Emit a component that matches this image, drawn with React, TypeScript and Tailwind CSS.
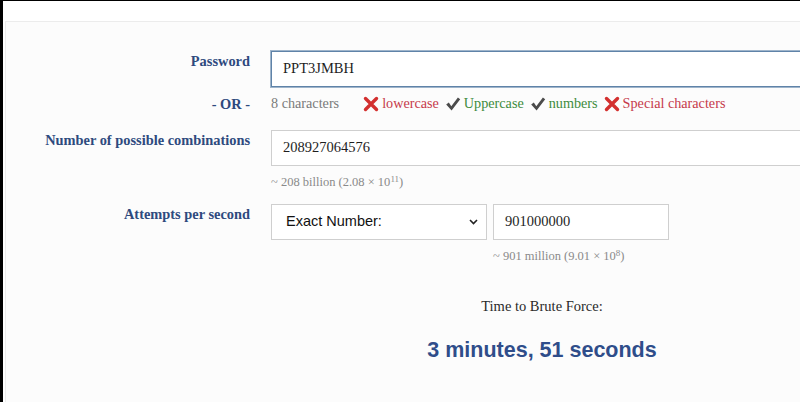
import React from 'react';

const serif = "font-['Liberation_Serif','Times_New_Roman',serif]";
const sans = "font-['Liberation_Sans',Arial,sans-serif]";

const CrossIcon: React.FC = () => (
  <svg width="16" height="16" viewBox="0 0 16 16" className="shrink-0">
    <path d="M2.5 2.5 L13.5 13.5 M13.5 2.5 L2.5 13.5" stroke="#d3302f" strokeWidth="3.4" strokeLinecap="round" />
  </svg>
);

const CheckIcon: React.FC = () => (
  <svg width="16" height="16" viewBox="0 0 16 16" className="shrink-0">
    <path d="M1.2 8.6 L3.8 6.6 L6.3 10.2 L12.9 1.4 L15.2 3.2 L6.6 14.6 Z" fill="#4b4b4b" />
  </svg>
);

interface RowProps {
  label: string;
  className?: string;
  labelClass?: string;
  children: React.ReactNode;
}

const Row: React.FC<RowProps> = ({ label, className = '', labelClass = 'pt-[1px] leading-[18px]', children }) => (
  <div className={`grid grid-cols-[244px_542px] gap-x-[21px] items-start ${className}`}>
    <div className={`text-right text-[14.4px] font-bold text-[#2e4a7e] ${serif} ${labelClass}`}>{label}</div>
    <div>{children}</div>
  </div>
);

const Check: React.FC<{ ok: boolean; text: string }> = ({ ok, text }) => (
  <span className="flex items-center gap-[3px]">
    {ok ? <CheckIcon /> : <CrossIcon />}
    <span className={ok ? 'text-[#3d8b3d]' : 'text-[#c63a4b]'}>{text}</span>
  </span>
);

export default function App() {
  return (
    <div className="w-[800px] h-[402px] overflow-hidden bg-white border-t border-l-[3px] border-black">
      <div className="pt-[20px] pl-[2px]">
        <div className="w-[1000px] h-[400px] border-t border-l border-[#ececec] bg-[#fcfcfc] pt-[29px]">
          <Row label="Password">
            <div className={`h-[36px] w-[542px] border border-[#5f83a8] shadow-[0_0_0_1px_#9fb5cb] bg-white flex items-center pl-[11px] text-[14.5px] text-[#1e1e1e] ${serif}`}>
              PPT3JMBH
            </div>
          </Row>

          <Row label="- OR -" className="mt-[7px]" labelClass="leading-[20px]">
            <div className={`flex items-center h-[20px] text-[14.2px] ${serif}`}>
              <span className="text-[#7a7a7a]">8 characters</span>
              <div className="flex items-center gap-[6px] ml-[24px]">
                <Check ok={false} text="lowercase" />
                <Check ok={true} text="Uppercase" />
                <Check ok={true} text="numbers" />
                <Check ok={false} text="Special characters" />
              </div>
            </div>
          </Row>

          <Row label="Number of possible combinations" className="mt-[16px]">
            <div className={`h-[36px] w-[542px] border border-[#cfcfcf] bg-white flex items-center pl-[11px] text-[14.5px] text-[#1e1e1e] ${serif}`}>
              208927064576
            </div>
            <div className={`mt-[8px] leading-[16px] text-[12.5px] text-[#8a8a8a] ${serif}`}>
              ~ 208 billion (2.08 × 10<sup className="text-[9px]">11</sup>)
            </div>
          </Row>

          <Row label="Attempts per second" className="mt-[14px]">
            <div className="flex gap-[6px]">
              <div className="w-[216px]">
                <div className={`h-[36px] border border-[#cfcfcf] bg-white flex items-center justify-between pl-[14px] pr-[8px] text-[14.5px] text-[#111] ${sans}`}>
                  <span>Exact Number:</span>
                  <svg width="9" height="6" viewBox="0 0 9 6">
                    <path d="M1 1 L4.5 4.5 L8 1" stroke="#222" strokeWidth="1.6" fill="none" />
                  </svg>
                </div>
              </div>
              <div className="w-[176px]">
                <div className={`h-[36px] border border-[#cfcfcf] bg-white flex items-center pl-[11px] text-[14.5px] text-[#1e1e1e] ${serif}`}>
                  901000000
                </div>
                <div className={`mt-[8px] leading-[16px] text-[12.5px] text-[#8a8a8a] ${serif}`}>
                  ~ 901 million (9.01 × 10<sup className="text-[9px]">8</sup>)
                </div>
              </div>
            </div>
            <div className="flex flex-col items-center">
              <div className={`mt-[33px] leading-[18px] text-[14.5px] text-[#2a2a2a] ${serif}`}>Time to Brute Force:</div>
              <div className={`mt-[22px] leading-[26px] text-[21.5px] font-bold text-[#2f4d8a] ${sans}`}>
                3 minutes, 51 seconds
              </div>
            </div>
          </Row>
        </div>
      </div>
    </div>
  );
}
